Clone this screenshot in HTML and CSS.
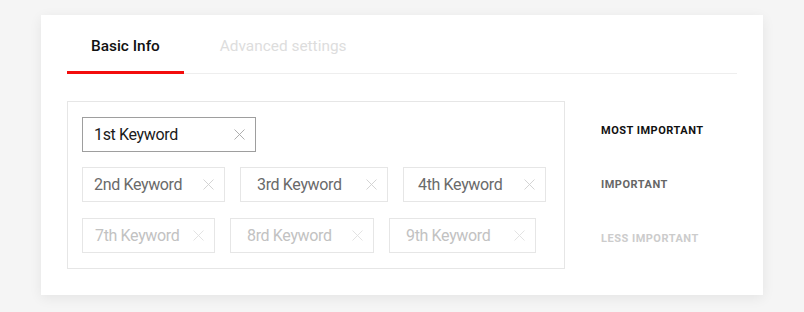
FILE: index.html
```html
<html>
<head>
<title>keywords</title>
<link rel="stylesheet" href="styles.css">
</head>

<body>
<div class="card">
    <div class="tabs">
        <div class="tab active">Basic Info</div>
        <div class="tab">Advanced settings</div>
    </div>

    <div class="body">
        <div class="panel">
            <div class="row top">
                <div class="chip main">1st Keyword
                    <svg class="x" viewBox="0 0 11 11"><path d="M0.5 0.5L10.5 10.5M10.5 0.5L0.5 10.5"/></svg>
                </div>
            </div>
            <div class="row mid">
                <div class="chip">2nd Keyword
                    <svg class="x" viewBox="0 0 11 11"><path d="M0.5 0.5L10.5 10.5M10.5 0.5L0.5 10.5"/></svg>
                </div>
                <div class="chip">3rd Keyword
                    <svg class="x" viewBox="0 0 11 11"><path d="M0.5 0.5L10.5 10.5M10.5 0.5L0.5 10.5"/></svg>
                </div>
                <div class="chip">4th Keyword
                    <svg class="x" viewBox="0 0 11 11"><path d="M0.5 0.5L10.5 10.5M10.5 0.5L0.5 10.5"/></svg>
                </div>
            </div>
            <div class="row low">
                <div class="chip">7th Keyword
                    <svg class="x" viewBox="0 0 11 11"><path d="M0.5 0.5L10.5 10.5M10.5 0.5L0.5 10.5"/></svg>
                </div>
                <div class="chip">8rd Keyword
                    <svg class="x" viewBox="0 0 11 11"><path d="M0.5 0.5L10.5 10.5M10.5 0.5L0.5 10.5"/></svg>
                </div>
                <div class="chip">9th Keyword
                    <svg class="x" viewBox="0 0 11 11"><path d="M0.5 0.5L10.5 10.5M10.5 0.5L0.5 10.5"/></svg>
                </div>
            </div>
        </div>

        <div class="levels">
            <div class="level top">MOST IMPORTANT</div>
            <div class="level mid">IMPORTANT</div>
            <div class="level low">LESS IMPORTANT</div>
        </div>
    </div>
</div>
</body>
</html>
```

FILE: styles.css
```css
body
{
    margin: 0;
    background-color: #f5f5f5;
    font-family: Roboto, "Liberation Sans", Arial, sans-serif;
}
.card
{
    width: 722px;
    box-sizing: border-box;
    margin: 15px 41px;
    padding: 0 26px 26px 26px;
    background-color: #fff;
    box-shadow: 0 3px 12px rgba(0, 0, 0, 0.07);
}
.tabs
{
    display: flex;
    border-bottom: 1px solid #eeeeee;
}
.tab
{
    padding: 22px 24px 16px 24px;
    margin-bottom: -1px;
    border-bottom: 3px solid transparent;
    font-size: 15.4px;
    line-height: 18px;
    font-weight: 500;
    color: #dddddd;
}
.tab + .tab
{
    margin-left: 12px;
    font-weight: 400;
}
.tab.active
{
    color: #111;
    border-bottom-color: #f30d0d;
}
.body
{
    display: flex;
    margin-top: 27px;
}
.panel
{
    width: 498px;
    box-sizing: border-box;
    border: 1px solid #e6e6e6;
    padding: 15px 14px 15px 14px;
    display: flex;
    flex-direction: column;
    gap: 15px;
}
.row
{
    display: flex;
    gap: 15px;
    height: 35px;
}
.row.low
{
    margin-top: 1px;
}
.chip
{
    display: flex;
    align-items: center;
    justify-content: space-between;
    box-sizing: border-box;
    width: 143px;
    height: 35px;
    padding: 0 10px 1px 11px;
    border: 1px solid #e6e6e6;
    font-size: 16px;
    letter-spacing: -0.35px;
    color: #6a6a6a;
}
.chip .x
{
    width: 11px;
    height: 11px;
    fill: none;
    stroke: #cfcfcf;
    stroke-width: 0.9;
}
.chip.main
{
    width: 174px;
    border-color: #9e9e9e;
    color: #1a1a1a;
}
.chip.main .x
{
    stroke: #a6a6a6;
}
.row.mid .chip:nth-child(2)
{
    width: 148px;
    padding-left: 16px;
}
.row.mid .chip:nth-child(3)
{
    padding-left: 14px;
}
.row.low .chip
{
    width: 147px;
    padding-left: 16px;
    color: #c2c2c2;
}
.row.low .chip:nth-child(1)
{
    width: 133px;
    padding-left: 12px;
}
.row.low .chip:nth-child(2)
{
    width: 144px;
}
.row.low .chip .x
{
    stroke: #e0e0e0;
}
.levels
{
    margin-left: 36px;
    padding-top: 16px;
    display: flex;
    flex-direction: column;
    gap: 16px;
}
.level
{
    height: 35px;
    line-height: 28px;
    font-size: 11px;
    font-weight: 700;
    letter-spacing: 0.5px;
    color: #111;
}
.level.mid
{
    line-height: 33px;
    color: #666;
}
.level.low
{
    line-height: 40px;
    color: #cccccc;
}
```
